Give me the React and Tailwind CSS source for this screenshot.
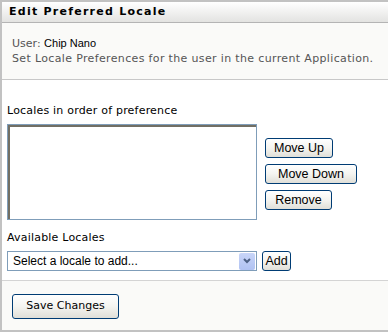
import React from 'react';

const XpButton = ({ children, className = '' }) => (
  <button
    type="button"
    className={`border border-[#003c74] rounded-[3px] bg-gradient-to-b from-white via-[#f4f4f0] to-[#e0dfd8] text-black text-[12.5px] leading-none font-['Liberation_Sans',sans-serif] ${className}`}
  >
    {children}
  </button>
);

export default function App() {
  return (
    <div className="w-[388px] h-[333px] bg-white font-['DejaVu_Sans',sans-serif]">
      <div className="h-[332px] border-l-2 border-t-2 border-b-2 border-[#c2c2c2] flex flex-col">
        {/* title bar */}
        <div className="h-[21px] shrink-0 bg-gradient-to-b from-white to-[#e3e3e1] border-b border-[#b4b4b4] pl-[7px] flex items-center">
          <span className="text-[11px] font-bold tracking-[1.25px] text-black">Edit Preferred Locale</span>
        </div>

        {/* info */}
        <div className="h-[57px] shrink-0 bg-[#fafaf8] border-b border-[#c8c8c8] pl-[10px] pt-[13px] text-[11px] leading-[15px] text-[#555]">
          <div>
            User: <span className="font-['Liberation_Sans',sans-serif] text-black text-[11px]">Chip Nano</span>
          </div>
          <div className="tracking-[0.35px]">Set Locale Preferences for the user in the current Application.</div>
        </div>

        {/* main */}
        <div className="h-[201px] shrink-0 bg-white border-b border-[#d4d4d4] pl-[5px] pt-[24px] text-[11px] text-black">
          <div className="leading-[13px] tracking-[0.2px]">Locales in order of preference</div>
          <div className="flex mt-[7px]">
            <div className="w-[250px] h-[96px] border border-[#7f9db9] bg-white">
              <div className="w-full h-full border-t-2 border-l-2 border-[#716f64]"></div>
            </div>
            <div className="flex flex-col items-start ml-[8px] mt-[14px] gap-[6px]">
              <XpButton className="w-[68px] h-[20px]">Move Up</XpButton>
              <XpButton className="w-[92px] h-[20px]">Move Down</XpButton>
              <XpButton className="w-[67px] h-[20px]">Remove</XpButton>
            </div>
          </div>
          <div className="leading-[13px] mt-[11px] tracking-[0.2px]">Available Locales</div>
          <div className="flex items-center mt-[7px]">
            <div className="w-[250px] h-[20px] border border-[#7f9db9] bg-white flex items-center">
              <span className="flex-1 pl-[5px] text-[12px] font-['Liberation_Sans',sans-serif]">Select a locale to add...</span>
              <span className="w-[16px] h-[17px] mr-[1px] bg-gradient-to-b from-[#c8d5f8] to-[#b0c2f2] rounded-[2px] flex items-center justify-center">
                <svg width="8" height="6" viewBox="0 0 8 6">
                  <path d="M1 1 L4 4 L7 1" stroke="#4d6185" strokeWidth="2" fill="none" />
                </svg>
              </span>
            </div>
            <XpButton className="ml-[5px] w-[29px] h-[20px]">Add</XpButton>
          </div>
        </div>

        {/* footer */}
        <div className="flex-1 bg-[#fafaf8] pl-[10px] pt-[11px]">
          <button
            type="button"
            className="w-[107px] h-[25px] border border-[#003c74] rounded-[3px] bg-gradient-to-b from-white via-[#f4f4f0] to-[#e0dfd8] text-black text-[11px] font-['DejaVu_Sans',sans-serif]"
          >
            Save Changes
          </button>
        </div>
      </div>
    </div>
  );
}
